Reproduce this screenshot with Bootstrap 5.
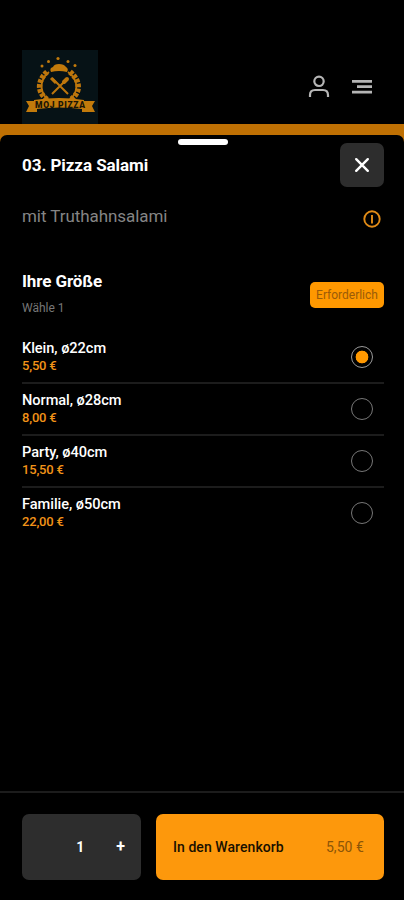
<!DOCTYPE html>
<html lang="de">
<head>
<meta charset="utf-8">
<meta name="viewport" content="width=device-width, initial-scale=1">
<title>Pizza Salami</title>
<link href="https://cdn.jsdelivr.net/npm/bootstrap@5.3.0/dist/css/bootstrap.min.css" rel="stylesheet">
<style>
body{background:#000;font-family:Roboto,"Liberation Sans",sans-serif;color:#fff;height:900px;overflow:hidden}
.page{height:900px}
.topbar{height:124px;padding:50px 32px 0 22px}
.logo{width:76px;height:74px}
.top-icons{gap:22px;padding-top:24px}
.sheet-wrap{background:#bf7003;padding-top:11px}
.sheet{background:#000;border-radius:7px 7px 0 0}
.grip{width:50px;height:6px;border-radius:3px;background:#fff;left:178px;top:4px}
.sheet-head{height:52px;padding-top:8px}
.inset{padding-left:22px;padding-right:20px}
.title{font-size:17px;font-weight:700;line-height:20px;letter-spacing:-.06px}
.close-btn{width:44px;height:44px;background:#2d2d2d;border-radius:7px}
.descr{height:60px;font-size:17px;color:#858585;letter-spacing:-.06px}
.group-head{height:84.600px;padding-top:24px}
.group-title{font-size:17px;font-weight:700;line-height:20px;letter-spacing:-.1px}
.hint{font-size:12px;line-height:14px;margin-top:10px;color:#777}
.required{width:74px;height:26px;border-radius:5px;background:#ff9800;color:#9a5b08;font-size:12px;font-weight:400;margin-top:11px}
.option{height:52px;padding-right:11px;border-bottom:2px solid #1c1c1c}
.option:last-child{height:50px;border-bottom:0}
.opt-name{font-size:14.6px;line-height:17px;font-weight:500;letter-spacing:-.05px}
.opt-price{font-size:13px;line-height:17px;font-weight:500;color:#f29318;letter-spacing:-.2px}
.form-check-input.pick{width:22px;height:22px;margin:0;background:#000;border:1.5px solid #777}
.form-check-input.pick:checked{background:radial-gradient(circle,#ff9800 0 6px,#000 6.7px);border-color:#999}
.footer-bar{height:109px;border-top:2px solid #1c1c1c;padding-top:21px;gap:15px}
.qty{width:119px;height:66px;border-radius:7px;background:#2d2d2d;font-size:14px;font-weight:700}
.cart{height:66px;border-radius:7px;background:#fd980c;color:#181000;font-size:14px;padding:0 20px 0 17px;font-weight:500;letter-spacing:.06px}
.sum{color:#8b5508;font-weight:400}
</style>
<script src="https://cdn.jsdelivr.net/npm/bootstrap@5.3.0/dist/js/bootstrap.bundle.min.js"></script>
</head>
<body>
<div class="page d-flex flex-column">
<header class="topbar d-flex justify-content-between align-items-start flex-shrink-0">
<svg class="logo" viewBox="0 0 76 74">
<rect width="76" height="74" fill="#061216"/>
<g fill="#c27a0b">
<circle cx="20" cy="16" r="1.500"/><circle cx="26.500" cy="11.500" r="1.500"/><circle cx="36" cy="8.500" r="1.600"/><circle cx="46" cy="11.500" r="1.500"/><circle cx="53" cy="15.500" r="1.500"/>
<path d="M29 22q-2-4 2-5 1-3 6-3 5 0 7 3 3 2 1 5-8-2-16 0z"/>
</g>
<g fill="none" stroke="#bd760c">
<path d="M27 22C17 30 17 43 27 50M46 22C57 30 57 43 47 50" stroke-width="1.800"/>
<path d="M25 22C15 31 15 43 26 50M48 22C59 31 59 43 48 50" stroke-width="5.500" stroke-dasharray="3.500 1.300"/>
<path d="M28 50h18" stroke-width="2"/>
<path d="M30 28l16 16M44 30L30 44" stroke-width="2"/>
<path d="M42 32l3-3" stroke-width="4" stroke-linecap="round"/>
<path d="M29 28l5 5" stroke-width="3"/>
</g>
<path d="M4 51h8v-1q25-4 50 0v1h11l-3 5 3 6H60v-3q-22-3-45 0v3H4l3-6z" fill="#c27a0b"/>
<text x="38" y="57.500" text-anchor="middle" textLength="50" font-family="Roboto,sans-serif" font-size="8.500" font-weight="900" fill="#1b1505">MOJ PIZZA</text>
</svg>
<div class="top-icons d-flex">
<svg width="22" height="26" viewBox="0 0 22 26" fill="none" stroke="#b5b5b5" stroke-width="2.200"><circle cx="11" cy="7.300" r="4.700"/><path d="M2 23v-2q0-5 5-5h8q5 0 5 5v2"/></svg>
<svg width="20" height="26" viewBox="0 0 20 26" fill="none" stroke="#b5b5b5" stroke-width="2.800"><path d="M0 7.300h20M5 12.700h15M0 18.200h20"/></svg>
</div>
</header>
<main class="sheet-wrap flex-grow-1 d-flex">
<section class="sheet position-relative w-100 d-flex flex-column">
<div class="grip position-absolute"></div>
<div class="sheet-head inset d-flex justify-content-between">
<h1 class="title mb-0 align-self-center">03. Pizza Salami</h1>
<button class="close-btn btn p-0 border-0 d-flex align-items-center justify-content-center" aria-label="Schließen"><svg width="16" height="16" viewBox="0 0 16 16" stroke="#fff" stroke-width="2.400" stroke-linecap="round"><path d="M2.200 2.200l11.600 11.600M13.800 2.200L2.200 13.800"/></svg></button>
</div>
<div class="descr inset d-flex justify-content-between align-items-center">
<span>mit Truthahnsalami</span>
<svg class="mt-1" width="21" height="20" viewBox="0 0 21 20" fill="none" stroke="#e18b16" stroke-width="1.900"><circle cx="9" cy="10" r="7.700"/><path d="M9 6v8.500"/></svg>
</div>
<div class="group-head inset d-flex justify-content-between">
<div><h2 class="group-title mb-0">Ihre Größe</h2><div class="hint">Wähle 1</div></div>
<span class="required d-flex align-items-center justify-content-center">Erforderlich</span>
</div>
<div class="inset d-flex flex-column">
<label class="option d-flex justify-content-between align-items-center"><span><span class="opt-name d-block">Klein, ø22cm</span><span class="opt-price d-block">5,50 €</span></span><input class="form-check-input pick" type="radio" name="size" checked></label>
<label class="option d-flex justify-content-between align-items-center"><span><span class="opt-name d-block">Normal, ø28cm</span><span class="opt-price d-block">8,00 €</span></span><input class="form-check-input pick" type="radio" name="size"></label>
<label class="option d-flex justify-content-between align-items-center"><span><span class="opt-name d-block">Party, ø40cm</span><span class="opt-price d-block">15,50 €</span></span><input class="form-check-input pick" type="radio" name="size"></label>
<label class="option d-flex justify-content-between align-items-center"><span><span class="opt-name d-block">Familie, ø50cm</span><span class="opt-price d-block">22,00 €</span></span><input class="form-check-input pick" type="radio" name="size"></label>
</div>
<footer class="footer-bar inset d-flex mt-auto">
<div class="qty d-flex align-items-center justify-content-end"><span class="me-4 pe-2">1</span><span class="me-3 fs-6">+</span></div>
<button class="cart btn border-0 flex-grow-1 d-flex justify-content-between align-items-center"><span>In den Warenkorb</span><span class="sum">5,50 €</span></button>
</footer>
</section>
</main>
</div>
</body>
</html>
